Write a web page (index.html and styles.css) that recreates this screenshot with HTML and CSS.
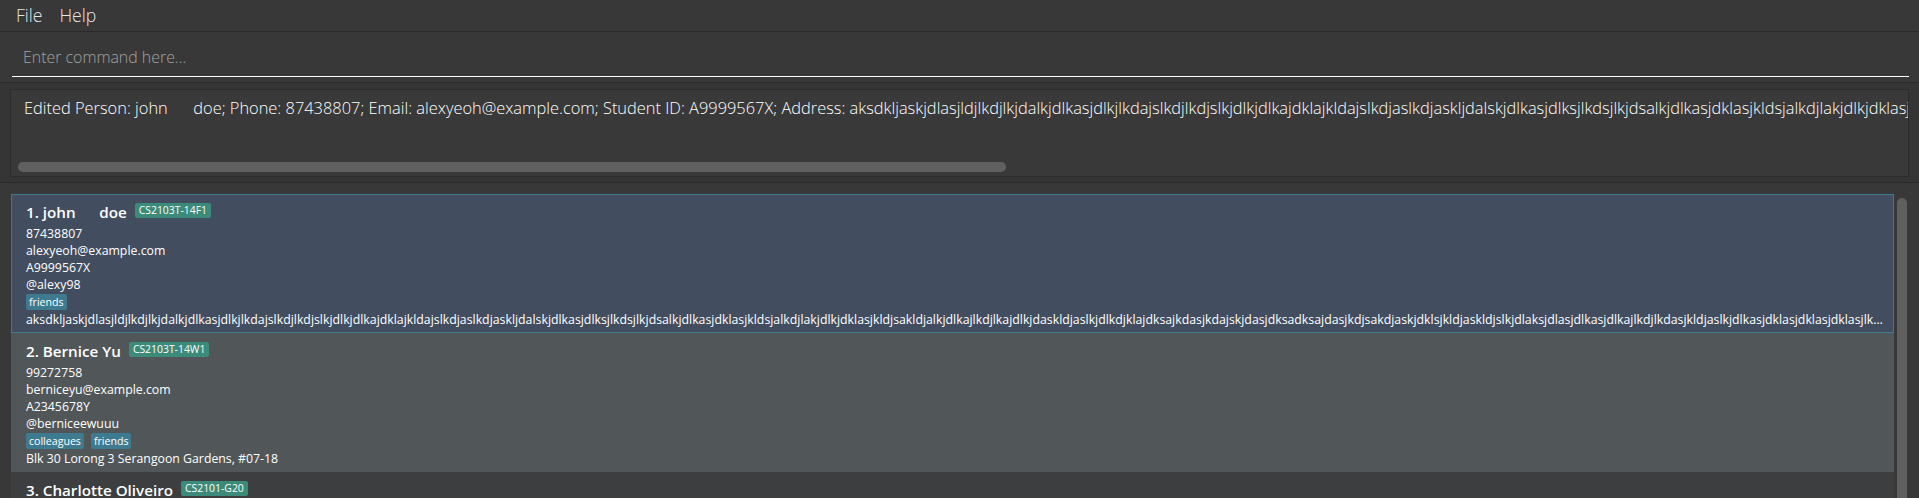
FILE: index.html
```html
<!DOCTYPE html>
<html lang="en">
<head>
<meta charset="utf-8">
<title>Address Book</title>
<link rel="stylesheet" href="styles.css">
</head>
<body>
<div class="app">
  <div class="menubar">
    <span class="menu">File</span>
    <span class="menu">Help</span>
  </div>
  <div class="command-pane">
    <div class="command-field">Enter command here...</div>
  </div>
  <div class="result-pane">
    <div class="result-box">
      <div class="result-text">Edited Person: john      doe; Phone: 87438807; Email: alexyeoh@example.com; Student ID: A9999567X; Address: aksdkljaskjdlasjldjlkdjlkjdalkjdlkasjdlkjlkdajslkdjlkdjslkjdlkjdlkajdklajkldajslkdjaslkdjaskljdalskjdlkasjdlksjlkdsjlkjdsalkjdlkasjdklasjkldsjalkdjlakjdlkjdklasjkldjsakldjalkjdlkajlkdjlkajdlkjdaskldjaslkjdlkdjklajdksajkdasjkdajskjdasjdksadksajdasjkdjsakdjaskjdklsjkldjaskldjslkjdlaksjdlasjdlkasjdlkajlkdjlkdasjkldjaslkjdlkasjdklasjdklasjdklasjlkdasjkl; Telegram: @alexy98; Tags: [friends]</div>
      <div class="hscroll"><div class="hthumb"></div></div>
    </div>
  </div>
  <div class="list-pane">
    <div class="list">
      <div class="cards">
        <div class="card selected">
          <div class="name-row"><span class="name">1. john      doe</span><span class="module">CS2103T-14F1</span></div>
          <div class="line">87438807</div>
          <div class="line">alexyeoh@example.com</div>
          <div class="line">A9999567X</div>
          <div class="line">@alexy98</div>
          <div class="tags"><span class="tag">friends</span></div>
          <div class="line address">aksdkljaskjdlasjldjlkdjlkjdalkjdlkasjdlkjlkdajslkdjlkdjslkjdlkjdlkajdklajkldajslkdjaslkdjaskljdalskjdlkasjdlksjlkdsjlkjdsalkjdlkasjdklasjkldsjalkdjlakjdlkjdklasjkldjsakldjalkjdlkajlkdjlkajdlkjdaskldjaslkjdlkdjklajdksajkdasjkdajskjdasjdksadksajdasjkdjsakdjaskjdklsjkldjaskldjslkjdlaksjdlasjdlkasjdlkajlkdjlkdasjkldjaslkjdlkasjdklasjdklasjdklasjlkdasjkldjaskldjaslkdjlaskjdlkasjdlkasjdlkasjdlkajsdlkjasldkjaslkdjlaskdj</div>
        </div>
        <div class="card odd">
          <div class="name-row"><span class="name">2. Bernice Yu</span><span class="module">CS2103T-14W1</span></div>
          <div class="line">99272758</div>
          <div class="line">berniceyu@example.com</div>
          <div class="line">A2345678Y</div>
          <div class="line">@berniceewuuu</div>
          <div class="tags"><span class="tag">colleagues</span><span class="tag">friends</span></div>
          <div class="line address">Blk 30 Lorong 3 Serangoon Gardens, #07-18</div>
        </div>
        <div class="card even">
          <div class="name-row"><span class="name">3. Charlotte Oliveiro</span><span class="module">CS2101-G20</span></div>
          <div class="line">93210283</div>
          <div class="line">charlotte@example.com</div>
          <div class="line">A3456789Z</div>
          <div class="line">@charlotte</div>
          <div class="tags"><span class="tag">neighbours</span></div>
          <div class="line address">Blk 11 Ang Mo Kio Street 74, #11-04</div>
        </div>
      </div>
      <div class="vscroll"><div class="vthumb"></div></div>
    </div>
  </div>
</div>
</body>
</html>
```
FILE: styles.css
```css
* {
  box-sizing: border-box;
}

html,
body {
  margin: 0;
  padding: 0;
}

body {
  width: 1919px;
  height: 498px;
  overflow: hidden;
  background: #383838;
  color: #ffffff;
  font-family: "Open Sans", "Noto Sans", sans-serif;
}

.app {
  display: flex;
  flex-direction: column;
  height: 498px;
}

/* menu bar */
.menubar {
  flex: none;
  height: 32px;
  display: flex;
  align-items: center;
  gap: 17px;
  padding-left: 16px;
  padding-bottom: 1px;
  border-bottom: 1px solid #2a2a2a;
  background: #383838;
  font-size: 17.6px;
  font-weight: 300;
  color: rgba(255, 255, 255, 0.9);
}

.menu {
  line-height: 24px;
}

/* command box */
.command-pane {
  flex: none;
  height: 50px;
  padding: 5px 10px 5px 12px;
}

.command-field {
  height: 40px;
  display: flex;
  align-items: center;
  padding-left: 11px;
  border-bottom: 1px solid #ffffff;
  font-size: 15.9px;
  font-weight: 300;
  color: #a3a3a3;
}

/* result display */
.result-pane {
  flex: none;
  height: 100px;
  padding: 6px 10px 5px 10px;
  border-top: 1px solid #2a2a2a;
  background: #353535;
}

.result-box {
  height: 88px;
  display: flex;
  flex-direction: column;
  border: 1px solid #2c2c2c;
  background: #393939;
}

.result-text {
  flex: 1;
  overflow: hidden;
  white-space: pre;
  padding: 7px 0 0 13px;
  font-size: 16.4px;
  font-weight: 300;
  line-height: 22px;
  color: #ffffff;
}

.hscroll {
  flex: none;
  height: 10px;
  margin: 0 4px 4px 7px;
}

.hthumb {
  width: 988px;
  height: 10px;
  border-radius: 5px;
  background: #606060;
}

/* person list */
.list-pane {
  flex: 1;
  min-height: 0;
  padding: 11px 11px 0 11px;
  border-top: 1px solid #2a2a2a;
}

.list {
  display: flex;
  height: 100%;
}

.cards {
  flex: 1;
  min-width: 0;
  display: flex;
  flex-direction: column;
}

.card {
  flex: none;
  height: 139px;
  padding: 5px 10px 5px 15px;
}

.card.selected {
  padding: 4px 9px 4px 14px;
  border: 1px solid #3e7b91;
  background: #424d5f;
}

.card.odd {
  background: #515658;
}

.card.even {
  background: #3c3e3f;
}

.name-row {
  height: 26px;
  display: flex;
  align-items: center;
  gap: 8px;
}

.name {
  white-space: pre;
  font-size: 15.2px;
  font-weight: 600;
  color: #ffffff;
}

.module {
  height: 15px;
  margin-top: -3px;
  padding: 0 4px;
  border-radius: 2px;
  background: #3c8a79;
  font-size: 10.4px;
  line-height: 15px;
  color: #ffffff;
}

.line {
  height: 17px;
  font-size: 12.3px;
  line-height: 17px;
  white-space: nowrap;
  color: #ffffff;
}

.address {
  overflow: hidden;
  text-overflow: ellipsis;
}

.tags {
  height: 18px;
  display: flex;
  align-items: center;
  gap: 7px;
}

.tag {
  height: 16px;
  padding: 0 3px;
  border-radius: 2px;
  background: #3e7b91;
  font-size: 10.6px;
  line-height: 16px;
  color: #ffffff;
}

.vscroll {
  flex: none;
  width: 14px;
  padding: 4px 1px 0 3px;
}

.vthumb {
  width: 10px;
  height: 400px;
  border-radius: 5px;
  background: #5f5f5f;
}
```
